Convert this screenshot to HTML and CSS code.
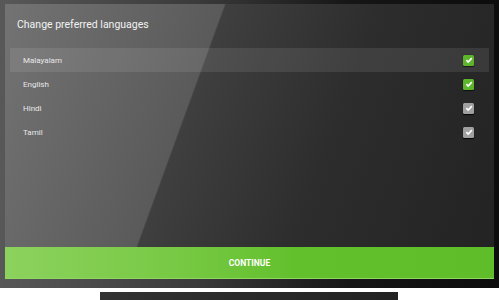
FILE: index.html
```html
<!DOCTYPE html>
<html>
<head>
<meta charset="utf-8">
<link rel="stylesheet" href="styles.css">
</head>
<body>
<div class="tv">
  <div class="bezel">
    <div class="screen">
      <div class="title">Change preferred languages</div>
      <div class="list">
        <div class="row active"><span class="label">Malayalam</span><span class="check on"><svg viewBox="0 0 10 10"><path d="M2.3 5.2 L4.2 7 L7.8 3.2" /></svg></span></div>
        <div class="row"><span class="label">English</span><span class="check on"><svg viewBox="0 0 10 10"><path d="M2.3 5.2 L4.2 7 L7.8 3.2" /></svg></span></div>
        <div class="row"><span class="label">Hindi</span><span class="check off"><svg viewBox="0 0 10 10"><path d="M2.3 5.2 L4.2 7 L7.8 3.2" /></svg></span></div>
        <div class="row"><span class="label">Tamil</span><span class="check off"><svg viewBox="0 0 10 10"><path d="M2.3 5.2 L4.2 7 L7.8 3.2" /></svg></span></div>
      </div>
    </div>
    <div class="continue">CONTINUE</div>
  </div>
  <div class="stand"></div>
</div>
</body>
</html>
```
FILE: styles.css
```css
html, body {
  margin: 0;
  padding: 0;
  background: #ffffff;
  width: 499px;
  height: 300px;
  overflow: hidden;
  font-family: Roboto, "Liberation Sans", sans-serif;
}
.tv {
  display: flex;
  flex-direction: column;
}
.bezel {
  width: 499px;
  height: 288px;
  box-sizing: border-box;
  padding: 4px 5px 9px 5px;
  background: linear-gradient(90deg, #585858 0%, #3a3a3a 40%, #161616 70%, #0c0c0c 100%);
  display: flex;
  flex-direction: column;
}
.screen {
  flex: 1;
  background: linear-gradient(110deg, #737373 0%, #5a5a5a 38%, #3f3f3f 38.3%, #2d2d2d 65%, #232323 100%);
  padding: 0 5px;
  display: flex;
  flex-direction: column;
}
.title {
  color: #f2f2f2;
  font-size: 10.5px;
  height: 44px;
  line-height: 41px;
  padding-left: 7px;
}
.list {
  display: flex;
  flex-direction: column;
}
.row {
  height: 24px;
  display: flex;
  align-items: center;
  justify-content: space-between;
  padding: 0 15px 0 13px;
}
.row.active {
  background: rgba(255, 255, 255, 0.09);
}
.label {
  color: #e8e8e8;
  font-size: 8px;
}
.check {
  width: 11px;
  height: 11px;
  border-radius: 1.5px;
  display: flex;
  align-items: center;
  justify-content: center;
}
.check svg {
  width: 10px;
  height: 10px;
  fill: none;
  stroke: #ffffff;
  stroke-width: 1.7;
}
.check.on {
  background: #5db52c;
  box-shadow: 0 0.5px 1px rgba(0, 0, 0, 0.6);
}
.check.off {
  background: #a0a0a0;
  box-shadow: 0 1px 1px rgba(0, 0, 0, 0.9);
}
.continue {
  height: 32px;
  background: linear-gradient(90deg, #8cd25e 0%, #78c944 35%, #62c02c 60%, #5fbd2a 100%);
  color: #ffffff;
  font-weight: 700;
  font-size: 8.5px;
  display: flex;
  align-items: center;
  justify-content: center;
  border-bottom: 1px solid #8fd760;
  box-sizing: border-box;
}
.stand {
  margin-left: 100px;
  width: 298px;
  height: 12px;
  margin-top: 4px;
  background: linear-gradient(90deg, #333 0%, #2a2a2a 50%, #222 100%);
}
```
